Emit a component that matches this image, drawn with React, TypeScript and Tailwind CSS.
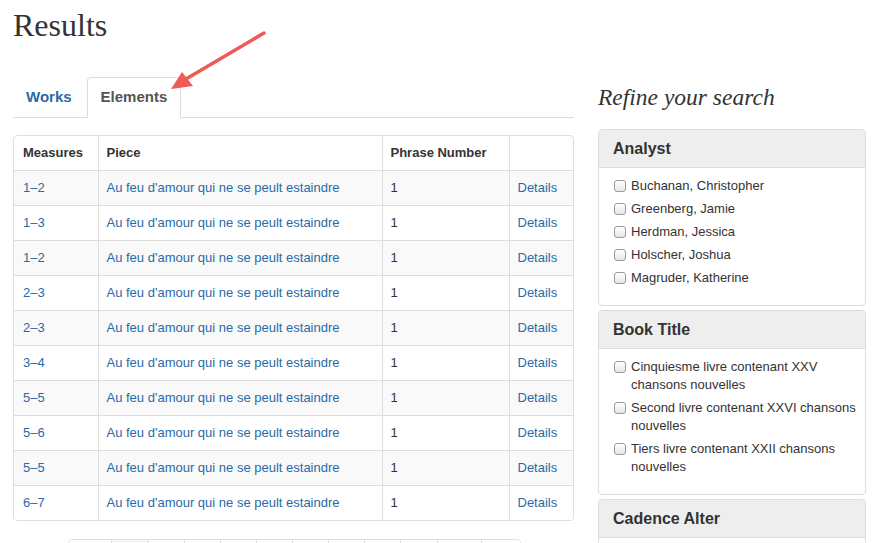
const rows = [
    ["1–2", "1"],
    ["1–3", "1"],
    ["1–2", "1"],
    ["2–3", "1"],
    ["2–3", "1"],
    ["3–4", "1"],
    ["5–5", "1"],
    ["5–6", "1"],
    ["5–5", "1"],
    ["6–7", "1"],
];

const analysts = [
    "Buchanan, Christopher",
    "Greenberg, Jamie",
    "Herdman, Jessica",
    "Holscher, Joshua",
    "Magruder, Katherine",
];

const books = [
    "Cinquiesme livre contenant XXV chansons nouvelles",
    "Second livre contenant XXVI chansons nouvelles",
    "Tiers livre contenant XXII chansons nouvelles",
];

const pageWidths = ["w-[42px]", "w-[37px]", "w-[36px]", "w-[36px]", "w-[36px]", "w-[36px]", "w-[36px]", "w-[36px]", "w-[36px]", "w-[37px]", "w-[44px]", "w-[39px]"];

function FacetPanel({ title, items }: { title: string; items: string[] }) {
    return (
        <div className="overflow-hidden rounded-[4px] border border-[#dddddd] bg-white">
            <div className="flex h-[38px] items-center border-b border-[#dddddd] bg-[#eeeeee] px-[14px] text-[16px] font-bold text-[#333333]">
                {title}
            </div>
            <ul className="pb-[13px] pl-[15px] pr-[4px] pt-[9px]">
                {items.map((item) => (
                    <li key={item} className="mb-[5px] flex gap-[5px] text-[13px] leading-[18px] text-[#333333]">
                        <span className="mt-[3px] h-[12px] w-[12px] shrink-0 rounded-[3px] border border-[#9a9a9a] bg-gradient-to-b from-white to-[#e6e6e6]" />
                        <span>{item}</span>
                    </li>
                ))}
            </ul>
        </div>
    );
}

export default function App() {
    return (
        <div className="relative h-[543px] w-[882px] overflow-hidden bg-white font-['Liberation_Sans',Arial,sans-serif]">
            <div className="flex gap-[24px] pl-[13px]">
                {/* Main column */}
                <div className="w-[561px] shrink-0">
                    <h1 className="pt-[8px] font-['Liberation_Serif',serif] text-[32px] leading-[35px] text-[#333333]">
                        Results
                    </h1>

                    {/* Tabs */}
                    <div className="mt-[34px] flex border-b border-[#dddddd]">
                        <div className="mr-[2px] flex h-[40px] items-center px-[13px] text-[15px] font-bold text-[#2a6aa6]">Works</div>
                        <div className="-mb-px flex h-[41px] items-center rounded-t-[4px] border border-b-white border-[#dddddd] bg-white px-[13px] text-[15px] font-bold text-[#555555]">
                            Elements
                        </div>
                    </div>

                    {/* Results table */}
                    <div className="mt-[17px] overflow-hidden rounded-[4px] border border-[#dddddd]">
                        <table className="w-full table-fixed border-collapse text-[13px] text-[#333333]">
                            <colgroup>
                                <col className="w-[84px]" />
                                <col className="w-[284px]" />
                                <col className="w-[127px]" />
                                <col />
                            </colgroup>
                            <thead>
                                <tr className="h-[34px]">
                                    <th className="px-[9px] text-left font-bold">Measures</th>
                                    <th className="border-l border-[#dddddd] px-[8px] text-left font-bold">Piece</th>
                                    <th className="border-l border-[#dddddd] px-[8px] text-left font-bold">Phrase Number</th>
                                    <th className="border-l border-[#dddddd]" />
                                </tr>
                            </thead>
                            <tbody>
                                {rows.map(([m, p], i) => (
                                    <tr key={i} className={`h-[35px] border-t border-[#dddddd] ${i % 2 === 0 ? "bg-[#f9f9f9]" : "bg-white"}`}>
                                        <td className="px-[9px] text-[#2a6aa6]">{m}</td>
                                        <td className="border-l border-[#dddddd] px-[8px] text-[#2a6aa6]">Au feu d'amour qui ne se peult estaindre</td>
                                        <td className="border-l border-[#dddddd] px-[8px]">{p}</td>
                                        <td className="border-l border-[#dddddd] px-[8px] text-[#2a6aa6]">Details</td>
                                    </tr>
                                ))}
                            </tbody>
                        </table>
                    </div>

                    {/* Pagination (only its top edge is in view) */}
                    <div className="ml-[55px] mt-[18px] flex w-fit overflow-hidden rounded-[4px] border border-[#dddddd]">
                        {pageWidths.map((w, i) => (
                            <div
                                key={i}
                                className={`h-[34px] ${w} ${i > 0 ? "border-l border-[#dddddd]" : ""} ${i === 1 ? "bg-[#f5f5f5]" : "bg-white"}`}
                            />
                        ))}
                    </div>
                </div>

                {/* Sidebar */}
                <div className="w-[268px] shrink-0">
                    <h2 className="mt-[82px] font-['Liberation_Serif',serif] text-[23.5px] italic leading-[30px] text-[#333333]">
                        Refine your search
                    </h2>
                    <div className="mt-[17px] flex flex-col gap-[4px]">
                        <FacetPanel title="Analyst" items={analysts} />
                        <FacetPanel title="Book Title" items={books} />
                        <FacetPanel title="Cadence Alter" items={[]} />
                    </div>
                </div>
            </div>

            {/* Annotation arrow */}
            <svg className="pointer-events-none absolute left-0 top-0" width="882" height="543">
                <line x1="264" y1="33" x2="186" y2="79" stroke="#ef5a55" strokeWidth="3.5" strokeLinecap="round" />
                <polygon points="171,89 182,72 193,86" fill="#ef5a55" />
            </svg>
        </div>
    );
}
